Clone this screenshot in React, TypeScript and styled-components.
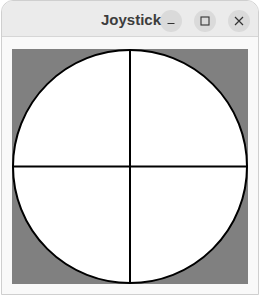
import React from "react";
import styled, { createGlobalStyle } from "styled-components";

const Global = createGlobalStyle`
  html, body {
    margin: 0;
    padding: 0;
    background: #ffffff;
  }
`;

const Window = styled.div`
  box-sizing: border-box;
  width: 258px;
  height: 295px;
  margin-left: 1px;
  border: 1px solid #cfcfcf;
  border-radius: 12px 12px 0 0;
  background: #f9f9f9;
  overflow: hidden;
  display: flex;
  flex-direction: column;
`;

const TitleBar = styled.div`
  height: 35px;
  flex: none;
  background: #ebebeb;
  border-bottom: 1px solid #d6d6d6;
  display: flex;
  align-items: center;
  position: relative;
`;

const Title = styled.div`
  position: absolute;
  left: 99px;
  top: 10px;
  font-family: "Liberation Sans", Arial, sans-serif;
  font-weight: bold;
  font-size: 15px;
  color: #3d3d3d;
`;

const Controls = styled.div`
  margin-left: auto;
  margin-right: 8px;
  margin-top: 4px;
  display: flex;
  gap: 12px;
`;

const RoundButton = styled.div`
  width: 22px;
  height: 22px;
  border-radius: 50%;
  background: #dadada;
  display: flex;
  align-items: center;
  justify-content: center;
`;

const Content = styled.div`
  padding: 12px 10px 0 10px;
`;

const Canvas = styled.div`
  width: 236px;
  height: 235px;
  background: #808080;
  svg {
    display: block;
  }
`;

export default function App() {
  return (
    <>
      <Global />
      <Window>
        <TitleBar>
          <Title>Joystick</Title>
          <Controls>
            <RoundButton>
              <svg width="10" height="10" viewBox="0 0 10 10">
                <line x1="1.5" y1="7.5" x2="8.5" y2="7.5" stroke="#333" strokeWidth="1.2" />
              </svg>
            </RoundButton>
            <RoundButton>
              <svg width="10" height="10" viewBox="0 0 10 10">
                <rect x="1" y="1" width="8" height="8" fill="none" stroke="#333" strokeWidth="1.1" />
              </svg>
            </RoundButton>
            <RoundButton>
              <svg width="10" height="10" viewBox="0 0 10 10">
                <path d="M1 1 L9 9 M9 1 L1 9" stroke="#333" strokeWidth="1.2" />
              </svg>
            </RoundButton>
          </Controls>
        </TitleBar>
        <Content>
          <Canvas>
            <svg width="236" height="235" viewBox="0 0 236 235">
              <ellipse cx="118" cy="117.5" rx="117" ry="116.5" fill="#ffffff" stroke="#000" strokeWidth="2" />
              <line x1="0" y1="117.5" x2="236" y2="117.5" stroke="#000" strokeWidth="2" />
              <line x1="118" y1="0" x2="118" y2="235" stroke="#000" strokeWidth="2" />
            </svg>
          </Canvas>
        </Content>
      </Window>
    </>
  );
}
